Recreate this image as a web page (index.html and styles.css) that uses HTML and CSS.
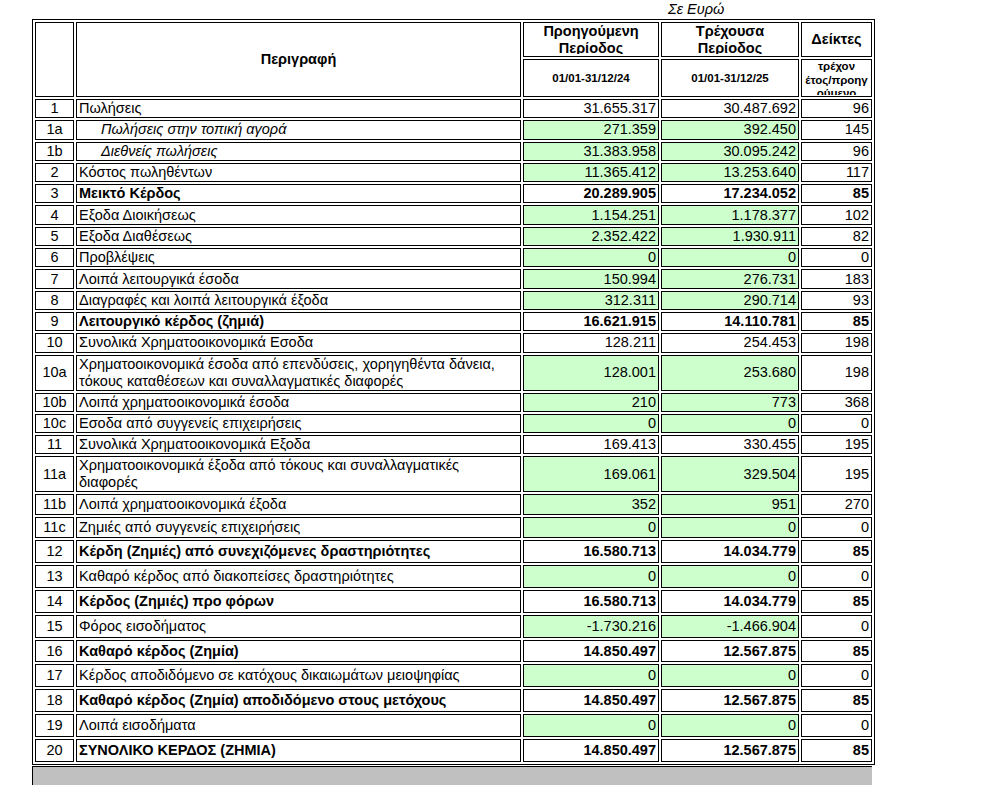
FILE: index.html
```html
<!DOCTYPE html>
<html lang="el">
<head>
<meta charset="utf-8">
<title>Κατάσταση Αποτελεσμάτων</title>
<link rel="stylesheet" href="styles.css">
</head>
<body>
<div class="sheet">
  <div class="unit">Σε Ευρώ</div>
  <table class="pl">
    <colgroup>
      <col class="c-no"><col class="c-desc"><col class="c-prev"><col class="c-cur"><col class="c-idx">
    </colgroup>
    <thead>
      <tr class="h1">
        <th rowspan="2"></th>
        <th rowspan="2" class="h-desc">Περιγραφή</th>
        <th class="h-per"><div class="clip2">Προηγούμενη<br>Περίοδος</div></th>
        <th class="h-per"><div class="clip2">Τρέχουσα<br>Περίοδος</div></th>
        <th class="h-idx">Δείκτες</th>
      </tr>
      <tr class="h2">
        <th class="h-date">01/01-31/12/24</th>
        <th class="h-date">01/01-31/12/25</th>
        <th class="h-small"><div class="clip3">τρέχον<br>έτος/προηγ<br>ούμενο</div></th>
      </tr>
    </thead>
    <tbody>
      <tr><td class="no">1</td><td class="d">Πωλήσεις</td><td class="n">31.655.317</td><td class="n">30.487.692</td><td class="n">96</td></tr>
      <tr class="g"><td class="no">1a</td><td class="d sub">Πωλήσεις στην τοπική αγορά</td><td class="n">271.359</td><td class="n">392.450</td><td class="n">145</td></tr>
      <tr class="g"><td class="no">1b</td><td class="d sub">Διεθνείς πωλήσεις</td><td class="n">31.383.958</td><td class="n">30.095.242</td><td class="n">96</td></tr>
      <tr class="g"><td class="no">2</td><td class="d">Κόστος πωληθέντων</td><td class="n">11.365.412</td><td class="n">13.253.640</td><td class="n">117</td></tr>
      <tr class="b"><td class="no">3</td><td class="d">Μεικτό Κέρδος</td><td class="n">20.289.905</td><td class="n">17.234.052</td><td class="n">85</td></tr>
      <tr class="g"><td class="no">4</td><td class="d">Εξοδα Διοικήσεως</td><td class="n">1.154.251</td><td class="n">1.178.377</td><td class="n">102</td></tr>
      <tr class="g"><td class="no">5</td><td class="d">Εξοδα Διαθέσεως</td><td class="n">2.352.422</td><td class="n">1.930.911</td><td class="n">82</td></tr>
      <tr class="g"><td class="no">6</td><td class="d">Προβλέψεις</td><td class="n">0</td><td class="n">0</td><td class="n">0</td></tr>
      <tr class="g"><td class="no">7</td><td class="d">Λοιπά λειτουργικά έσοδα</td><td class="n">150.994</td><td class="n">276.731</td><td class="n">183</td></tr>
      <tr class="g"><td class="no">8</td><td class="d">Διαγραφές και λοιπά λειτουργικά έξοδα</td><td class="n">312.311</td><td class="n">290.714</td><td class="n">93</td></tr>
      <tr class="b"><td class="no">9</td><td class="d">Λειτουργικό κέρδος (ζημιά)</td><td class="n">16.621.915</td><td class="n">14.110.781</td><td class="n">85</td></tr>
      <tr><td class="no">10</td><td class="d">Συνολικά Χρηματοοικονομικά Εσοδα</td><td class="n">128.211</td><td class="n">254.453</td><td class="n">198</td></tr>
      <tr class="g"><td class="no">10a</td><td class="d">Χρηματοοικονομικά έσοδα από επενδύσεις, χορηγηθέντα δάνεια, τόκους καταθέσεων και συναλλαγματικές διαφορές</td><td class="n">128.001</td><td class="n">253.680</td><td class="n">198</td></tr>
      <tr class="g"><td class="no">10b</td><td class="d">Λοιπά χρηματοοικονομικά έσοδα</td><td class="n">210</td><td class="n">773</td><td class="n">368</td></tr>
      <tr class="g"><td class="no">10c</td><td class="d">Εσοδα από συγγενείς επιχειρήσεις</td><td class="n">0</td><td class="n">0</td><td class="n">0</td></tr>
      <tr><td class="no">11</td><td class="d">Συνολικά Χρηματοοικονομικά Εξοδα</td><td class="n">169.413</td><td class="n">330.455</td><td class="n">195</td></tr>
      <tr class="g"><td class="no">11a</td><td class="d">Χρηματοοικονομικά έξοδα από τόκους και συναλλαγματικές διαφορές</td><td class="n">169.061</td><td class="n">329.504</td><td class="n">195</td></tr>
      <tr class="g t1"><td class="no">11b</td><td class="d">Λοιπά χρηματοοικονομικά έξοδα</td><td class="n">352</td><td class="n">951</td><td class="n">270</td></tr>
      <tr class="g t1"><td class="no">11c</td><td class="d">Ζημιές από συγγενείς επιχειρήσεις</td><td class="n">0</td><td class="n">0</td><td class="n">0</td></tr>
      <tr class="b t2"><td class="no">12</td><td class="d">Κέρδη (Ζημιές) από συνεχιζόμενες δραστηριότητες</td><td class="n">16.580.713</td><td class="n">14.034.779</td><td class="n">85</td></tr>
      <tr class="g t2"><td class="no">13</td><td class="d">Καθαρό κέρδος από διακοπείσες δραστηριότητες</td><td class="n">0</td><td class="n">0</td><td class="n">0</td></tr>
      <tr class="b t2"><td class="no">14</td><td class="d">Κέρδος (Ζημιές) προ φόρων</td><td class="n">16.580.713</td><td class="n">14.034.779</td><td class="n">85</td></tr>
      <tr class="g t2"><td class="no">15</td><td class="d">Φόρος εισοδήματος</td><td class="n">-1.730.216</td><td class="n">-1.466.904</td><td class="n">0</td></tr>
      <tr class="b t2"><td class="no">16</td><td class="d">Καθαρό κέρδος (Ζημία)</td><td class="n">14.850.497</td><td class="n">12.567.875</td><td class="n">85</td></tr>
      <tr class="g t2"><td class="no">17</td><td class="d">Κέρδος αποδιδόμενο σε κατόχους δικαιωμάτων μειοψηφίας</td><td class="n">0</td><td class="n">0</td><td class="n">0</td></tr>
      <tr class="b t2"><td class="no">18</td><td class="d">Καθαρό κέρδος (Ζημία) αποδιδόμενο στους μετόχους</td><td class="n">14.850.497</td><td class="n">12.567.875</td><td class="n">85</td></tr>
      <tr class="g t2"><td class="no">19</td><td class="d">Λοιπά εισοδήματα</td><td class="n">0</td><td class="n">0</td><td class="n">0</td></tr>
      <tr class="b t2"><td class="no">20</td><td class="d">ΣΥΝΟΛΙΚΟ ΚΕΡΔΟΣ (ΖΗΜΙΑ)</td><td class="n">14.850.497</td><td class="n">12.567.875</td><td class="n">85</td></tr>
    </tbody>
  </table>
  <div class="footer-band"></div>
</div>
</body>
</html>
```
FILE: styles.css
```css
* { box-sizing: border-box; }
html, body { margin: 0; padding: 0; background: #fff; }
body {
  font-family: "Liberation Sans", Arial, sans-serif;
  font-size: 14.5px;
  color: #000;
}
.sheet {
  width: 843px;
  margin-left: 32px;
}
.unit {
  height: 19px;
  padding-left: 636px;
  font-style: italic;
  line-height: 17px;
  padding-top: 1px;
}
.pl {
  width: 843px;
  table-layout: fixed;
  border-collapse: separate;
  border-spacing: 2px;
  border: 1px solid #000;
}
.c-no { width: 39px; }
.c-desc { width: 445px; }
.c-prev { width: 136px; }
.c-cur { width: 138px; }
.c-idx { width: 71px; }

.pl th, .pl td {
  border: 1px solid #000;
  padding: 0 2px;
  line-height: 17px;
}
.pl th {
  font-weight: bold;
  text-align: center;
  vertical-align: middle;
}
.h1 th { height: 35px; }
.h2 th { height: 38px; }
.pl th.h-per { vertical-align: top; }
.clip2 {
  height: 31px;
  overflow: hidden;
  line-height: 17px;
}
.h-date { font-size: 11.5px; }
.pl th.h-small { font-size: 11.5px; vertical-align: top; }
.clip3 {
  height: 35px;
  overflow: hidden;
  line-height: 13.5px;
}
.pl td { height: 19.3px; vertical-align: middle; }
.no { text-align: center; }
.d { text-align: left; }
.d.sub { font-style: italic; padding-left: 24px; }
.n { text-align: right; }
.g td:nth-child(3), .g td:nth-child(4) { background: #ccffcc; }
.b td.d, .b td.n { font-weight: bold; }
.pl .t1 td { height: 21px; }
.pl .t2 td { height: 22.8px; }
.footer-band {
  height: 22px;
  margin: 1px 3px 0 0;
  border-left: 1px solid #000;
  border-top: 1px solid #000;
  background: #c0c0c0;
}
```
